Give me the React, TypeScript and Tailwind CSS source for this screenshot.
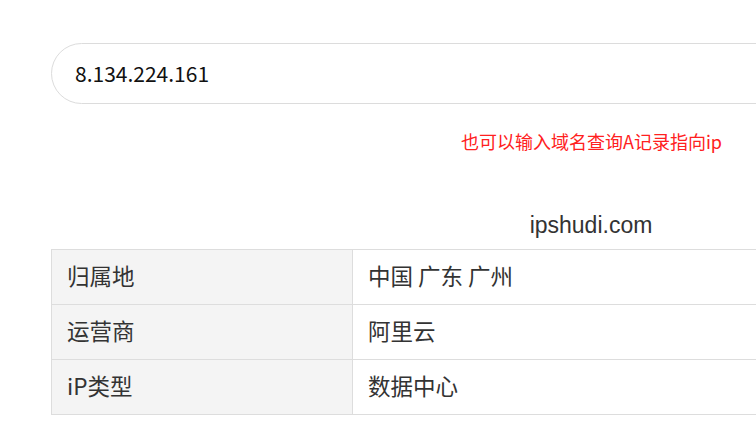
import React from "react";

const rows = [
  ["归属地", "中国 广东 广州"],
  ["运营商", "阿里云"],
  ["iP类型", "数据中心"],
];

export default function App() {
  return (
    <div
      className="w-[756px] h-[433px] overflow-hidden bg-white text-[#333]"
      style={{ fontFamily: '"Noto Sans CJK SC", "Noto Sans", sans-serif' }}
    >
      <div className="ml-[51px] w-[1080px] pt-[43px]">
        <div className="h-[61px] rounded-full border border-[#dcdcdc] flex items-center pl-[23px] text-[21px] text-[#111]">
          8.134.224.161
        </div>
        <div className="w-[756px] -ml-[51px] flex justify-end pr-[34px] mt-[25px] text-[18px] leading-[24px] text-[#ff2020]">
          也可以输入域名查询A记录指向ip
        </div>
        <div
          className="text-center mt-[59px] text-[23px] leading-[26px] text-[#333]"
          style={{ fontFamily: '"Liberation Sans", Arial, sans-serif' }}
        >
          ipshudi.com
        </div>
        <table className="mt-[11px] w-full border-collapse text-[22.5px]">
          <tbody>
            {rows.map(([k, v]) => (
              <tr key={k} className="h-[55px]">
                <td className="w-[301px] border border-[#dddddd] bg-[#f4f4f4] pl-[15px] pb-[2px]">{k}</td>
                <td className="border border-[#dddddd] pl-[15px] pb-[2px]">{v}</td>
              </tr>
            ))}
          </tbody>
        </table>
      </div>
    </div>
  );
}
